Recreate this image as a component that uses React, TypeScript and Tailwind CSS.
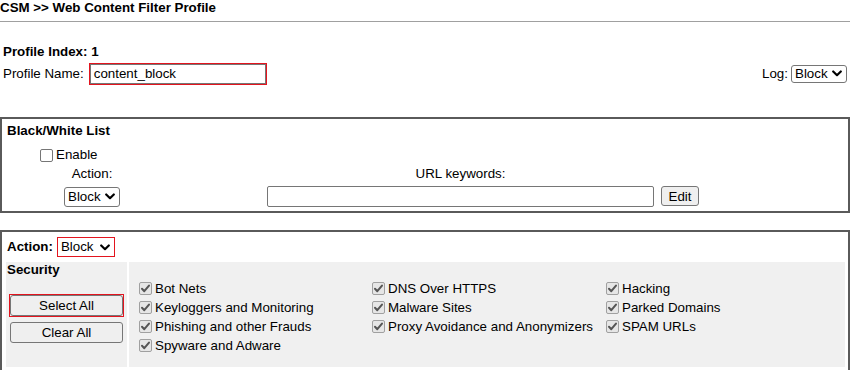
import React from 'react';

const securityCols: string[][] = [
  ['Bot Nets', 'Keyloggers and Monitoring', 'Phishing and other Frauds', 'Spyware and Adware'],
  ['DNS Over HTTPS', 'Malware Sites', 'Proxy Avoidance and Anonymizers'],
  ['Hacking', 'Parked Domains', 'SPAM URLs'],
];

function Chevron() {
  return (
    <svg width="10" height="7" viewBox="0 0 10 7" className="shrink-0">
      <path d="M1.2 1.5 L5 5.2 L8.8 1.5" fill="none" stroke="#000" strokeWidth="2.2" strokeLinecap="round" strokeLinejoin="round" />
    </svg>
  );
}

// looks like the browser's default <select>
function FakeSelect({ value, className = '' }: { value: string; className?: string }) {
  return (
    <div
      className={`flex items-center justify-between bg-white border border-[#767676] rounded-[3px] pl-[3px] pr-[4px] ${className}`}
    >
      <span>{value}</span>
      <Chevron />
    </div>
  );
}

function CheckedBox() {
  return (
    <span className="w-[13px] h-[13px] shrink-0 rounded-[2px] border border-[#a0a0a0] bg-[#e6e6e6] flex items-center justify-center">
      <svg width="11" height="11" viewBox="0 0 11 11">
        <path d="M2 5.8 L4.3 8.2 L9 2.6" fill="none" stroke="#555" strokeWidth="2" strokeLinecap="round" strokeLinejoin="round" />
      </svg>
    </span>
  );
}

function Btn({ label, className = '' }: { label: string; className?: string }) {
  return (
    <button
      type="button"
      className={`bg-[#efefef] border border-[#767676] rounded-[3px] text-[13.33px] leading-none text-black ${className}`}
    >
      {label}
    </button>
  );
}

export default function App() {
  return (
    <div className="w-[850px] h-[370px] overflow-hidden bg-white text-black text-[13.33px] font-['Liberation_Sans',Arial,sans-serif]">
      {/* header */}
      <div className="h-[21px] leading-[15px] font-bold">CSM &gt;&gt; Web Content Filter Profile</div>
      <div className="border-t border-[#a0a0a0]" />

      {/* profile */}
      <div className="mt-[22px] pl-[3px] leading-[15px] font-bold">Profile Index: 1</div>
      <div className="mt-[4px] h-[22px] flex items-center justify-between pl-[3px] pr-[3px]">
        <div className="flex items-center">
          <span>Profile Name:</span>
          <div className="ml-[5px] w-[178px] h-[22px] border border-[#e3141e] shadow-[inset_0_0_0_1px_#767676] flex items-center pl-[4px]">
            content_block
          </div>
        </div>
        <div className="flex items-center">
          <span className="mr-[3px]">Log:</span>
          <FakeSelect value="Block" className="w-[56px] h-[18px]" />
        </div>
      </div>

      {/* black / white list */}
      <div className="mt-[32px] border-2 border-[#5a5a5a] pl-[5px] pb-[4px]">
        <div className="pt-[4px] leading-[16px] font-bold">Black/White List</div>
        <div className="mt-[8px] h-[16px] pl-[33px] flex items-center gap-[3px]">
          <span className="w-[13px] h-[13px] rounded-[2px] border border-[#767676] bg-white" />
          <span>Enable</span>
        </div>
        <div className="mt-[3px] grid grid-cols-[170px_90px_387px_auto]">
          <div className="text-center leading-[16px]">Action:</div>
          <div />
          <div className="text-center leading-[16px]">URL keywords:</div>
          <div />
        </div>
        <div className="mt-[4px] h-[21px] grid grid-cols-[170px_90px_387px_auto] items-center">
          <div className="flex justify-center">
            <FakeSelect value="Block" className="w-[56px] h-[20px]" />
          </div>
          <div />
          <div className="h-[21px] bg-white border border-[#767676] rounded-[2px]" />
          <div className="pl-[7px]">
            <Btn label="Edit" className="w-[38px] h-[20px]" />
          </div>
        </div>
      </div>

      {/* categories */}
      <div className="mt-[17px] border-2 border-[#5a5a5a] pl-[4px] pr-[3px] pb-[3px]">
        <div className="pt-[5px] h-[25px] flex items-center pl-[1px]">
          <span className="font-bold mr-[4px]">Action:</span>
          <FakeSelect value="Block" className="w-[58px] h-[20px] !border-[#e3141e] rounded-none" />
        </div>
        <div className="mt-[5px] flex gap-[2px]">
          <div className="w-[121px] bg-[#f0f0f0] pl-[1px]">
            <div className="font-bold leading-[16px]">Security</div>
            <div className="mt-[16px] ml-[2px] w-[115px] border border-[#e3141e]">
              <Btn label="Select All" className="w-[113px] h-[21px] block" />
            </div>
            <Btn label="Clear All" className="mt-[5px] ml-[3px] w-[113px] h-[21px] block" />
          </div>
          <div className="flex-1 bg-[#f0f0f0] pt-[17px] pl-[10px] pb-[12px] grid grid-cols-[233px_234px_auto]">
            {securityCols.map((col, ci) => (
              <div key={ci} className="flex flex-col">
                {col.map(item => (
                  <div key={item} className="h-[19px] flex items-center gap-[3px] whitespace-nowrap">
                    <CheckedBox />
                    <span>{item}</span>
                  </div>
                ))}
              </div>
            ))}
          </div>
        </div>
      </div>
    </div>
  );
}
